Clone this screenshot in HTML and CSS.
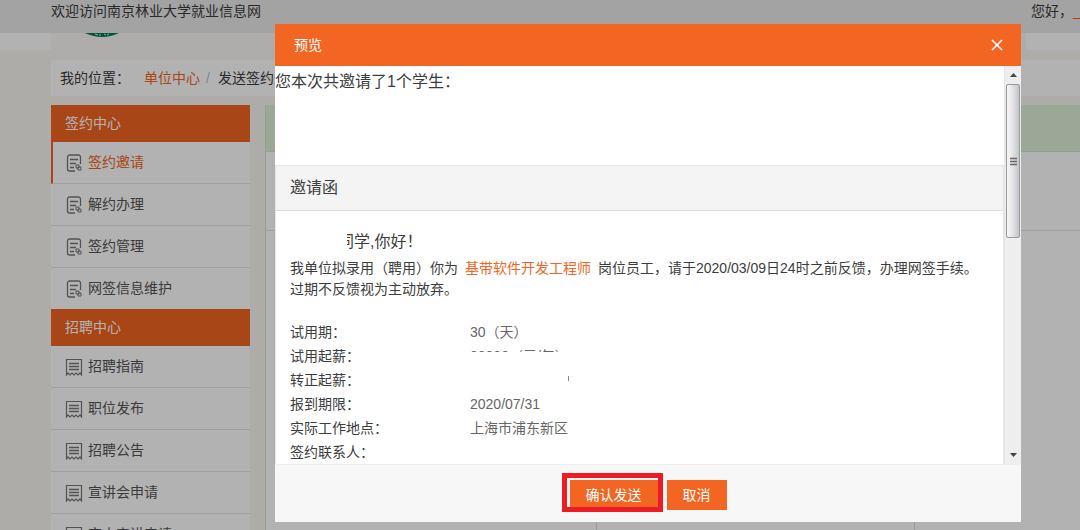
FILE: index.html
```html
<!DOCTYPE html>
<html lang="zh-CN">
<head>
<meta charset="utf-8">
<title>发送签约邀请</title>
<link rel="stylesheet" href="styles.css">
</head>
<body>
<svg class="defs" aria-hidden="true">
  <symbol id="icon-doc" viewBox="0 0 16 18">
    <path d="M14.500 10V3a2 2 0 0 0-2-2H3.500A2 2 0 0 0 1.500 3v12a2 2 0 0 0 2 2H9M4 5.500h8M4 9.500h6M4 13.500h4" fill="none" stroke="currentColor" stroke-width="1.300"/>
    <path d="M10 11h3v3h-3zM12 13h3v3h-3z" fill="none" stroke="currentColor"/>
  </symbol>
  <symbol id="icon-bill" viewBox="0 0 18 18">
    <path d="M1.500 17v-15.500h15v15.500l-1.500-2-2 2-2-2-2 2-2-2-2 2-2-2z" fill="none" stroke="currentColor" stroke-width="1.200"/>
    <path d="M4 5.500h10M4 8.500h10M4 11.500h10" fill="none" stroke="currentColor" stroke-width="1.600"/>
  </symbol>
</svg>

<div class="page">
  <div class="topbar">
    <span>欢迎访问南京林业大学就业信息网</span>
    <span class="greeting">您好，<a href="#" class="account">_</a></span>
  </div>
  <div class="header">
    <div class="header-inner">
      <svg class="logo" viewBox="0 0 40 5" aria-hidden="true">
        <path d="M3 0h34q-17 8-34 0z" fill="#007a55"/>
        <path d="M13 1l3 1M18 1v2M22 1l2 1M27 1l-2 1" stroke="#d9eee5" fill="none"/>
      </svg>
    </div>
  </div>
  <nav class="breadcrumb">
    <span>我的位置：</span>
    <a href="#">单位中心</a><span class="slash">/</span><span>发送签约邀请</span>
  </nav>
  <div class="columns">
    <aside class="sidebar">
      <h2>签约中心</h2>
      <ul>
        <li class="active"><a href="#"><svg><use href="#icon-doc"/></svg><span>签约邀请</span></a></li>
        <li><a href="#"><svg><use href="#icon-doc"/></svg>解约办理</a></li>
        <li><a href="#"><svg><use href="#icon-doc"/></svg>签约管理</a></li>
        <li><a href="#"><svg><use href="#icon-doc"/></svg>网签信息维护</a></li>
      </ul>
      <h2>招聘中心</h2>
      <ul>
        <li><a href="#"><svg class="bill"><use href="#icon-bill"/></svg>招聘指南</a></li>
        <li><a href="#"><svg class="bill"><use href="#icon-bill"/></svg>职位发布</a></li>
        <li><a href="#"><svg class="bill"><use href="#icon-bill"/></svg>招聘公告</a></li>
        <li><a href="#"><svg class="bill"><use href="#icon-bill"/></svg>宣讲会申请</a></li>
        <li><a href="#"><svg class="bill"><use href="#icon-bill"/></svg>空中宣讲申请</a></li>
      </ul>
    </aside>
    <main class="content">
      <div class="notice"></div>
      <div class="filters"></div>
      <div class="grid"><div></div><div></div><div></div></div>
    </main>
  </div>
</div>

<div class="backdrop"></div>

<section class="modal" role="dialog" aria-labelledby="modal-title">
  <header class="modal-head">
    <h1 id="modal-title">预览</h1>
    <button class="close" type="button" aria-label="关闭">
      <svg viewBox="0 0 12 12"><path d="M1 1l10 10M11 1L1 11" fill="none" stroke="currentColor" stroke-width="1.600"/></svg>
    </button>
  </header>
  <div class="modal-body">
    <div class="scroll-area">
      <p class="summary">您本次共邀请了1个学生：</p>
      <article class="letter">
        <h2>邀请函</h2>
        <div class="letter-body">
          <p class="salute"><span class="masked-name">同</span>学,你好！</p>
          <p class="text">我单位拟录用（聘用）你为<a href="#">基带软件开发工程师</a>岗位员工，请于2020/03/09日24时之前反馈，办理网签手续。过期不反馈视为主动放弃。</p>
          <dl>
            <dt>试用期：</dt><dd>30（天）</dd>
            <dt>试用起薪：</dt><dd><span class="masked-pay">00000（元/年）</span></dd>
            <dt>转正起薪：</dt><dd class="masked-row"><i></i></dd>
            <dt>报到期限：</dt><dd>2020/07/31</dd>
            <dt>实际工作地点：</dt><dd>上海市浦东新区</dd>
            <dt>签约联系人：</dt><dd></dd>
          </dl>
        </div>
      </article>
    </div>
    <div class="scrollbar" aria-hidden="true">
      <span class="arrow"><svg viewBox="0 0 7 4"><path d="M0 4L3.500 0L7 4z"/></svg></span>
      <span class="thumb"><svg viewBox="0 0 7 9"><path d="M0 1.500h7M0 4.500h7M0 7.500h7" stroke="#666" stroke-width="1.500"/></svg></span>
      <span class="arrow down"><svg viewBox="0 0 7 4"><path d="M0 0L3.500 4L7 0z"/></svg></span>
    </div>
  </div>
  <footer class="modal-foot">
    <button class="btn confirm" type="button">确认发送</button>
    <button class="btn" type="button">取消</button>
  </footer>
</section>
</body>
</html>
```

FILE: styles.css
```css
* {
  box-sizing: border-box;
  margin: 0;
  padding: 0;
}

body {
  height: 100vh;
  overflow: hidden;
  background: #f9f7f3;
  color: #3c3c3c;
  font: 14px/21px "Liberation Sans", "Noto Sans CJK SC", sans-serif;
}

a {
  color: #f26522;
  text-decoration: none;
}

ul {
  list-style: none;
}

button {
  border: 0;
  color: #fff;
  font: inherit;
  cursor: pointer;
}

.defs {
  display: none;
}

.page {
  height: 100vh;
  overflow: hidden;
}

/* Page behind the dialog */
.topbar {
  display: flex;
  justify-content: space-between;
  height: 33px;
  padding-left: 51px;
  background: #eaeaea;
  line-height: 23px;
  white-space: nowrap;
}

.greeting {
  width: 49px;
  overflow: hidden;
}

.header {
  height: 17px;
  padding: 0 54px 0 51px;
  background: #fff;
}

.header-inner {
  height: 17px;
  padding-left: 31px;
  background: #f9f8f7;
}

.logo {
  display: block;
  width: 40px;
  height: 5px;
}

.breadcrumb {
  display: flex;
  align-items: center;
  height: 36px;
  margin: 10px 0 9px 51px;
  padding-left: 9px;
  background: #fff;
}

.breadcrumb a {
  margin-left: 14px;
}

.slash {
  width: 18px;
  padding-left: 6px;
  color: #b9bcc9;
}

.columns {
  display: flex;
  gap: 15px;
  padding-left: 51px;
}

.sidebar {
  width: 199px;
  background: #fff;
}

.sidebar h2 {
  height: 37px;
  padding-left: 14px;
  background: #f26522;
  color: #fff;
  font-size: 14px;
  font-weight: 400;
  line-height: 36px;
}

.sidebar li {
  border-bottom: 1px solid #e5e5e5;
}

.sidebar li:last-child {
  border-bottom: 0;
}

.sidebar li a {
  display: flex;
  align-items: center;
  gap: 6px;
  height: 41px;
  padding-left: 15px;
  color: #555;
}

.sidebar li.active {
  border-left: 2px solid #f26522;
}

.sidebar li.active a {
  padding-left: 13px;
}

.sidebar li.active span {
  color: #f26522;
}

.sidebar svg {
  width: 16px;
  height: 18px;
  color: #777;
}

.sidebar svg.bill {
  width: 18px;
  height: 18px;
  margin: 0 -1px;
}

.content {
  flex: 1;
  height: 440px;
  display: flex;
  flex-direction: column;
  border-left: 1px solid #d6e9c6;
  background: #fff;
}

.notice {
  height: 47px;
  border-bottom: 1px solid #d6e9c6;
  background: #dff0d8;
}

.filters {
  height: 79px;
  border-bottom: 1px solid #e5e5e5;
}

.grid {
  flex: 1;
  display: grid;
  grid-template-columns: 330px 318px 1fr;
}

.grid div + div {
  border-left: 1px solid #ddd;
}

.backdrop {
  position: fixed;
  inset: 0;
  background: rgba(0, 0, 0, 0.3);
}

/* Dialog */
.modal {
  position: fixed;
  inset: 24px 59px 8px 275px;
  display: flex;
  flex-direction: column;
  background: #fff;
}

.modal-head {
  display: flex;
  align-items: center;
  justify-content: space-between;
  height: 42px;
  padding: 0 18px 0 19px;
  background: #f26522;
  color: #fff;
}

.modal-head h1 {
  font-size: 14px;
  font-weight: 400;
}

.close {
  width: 12px;
  height: 12px;
  background: none;
}

.close svg {
  display: block;
}

.modal-body {
  flex: 1;
  display: flex;
  min-height: 0;
}

.scroll-area {
  flex: 1;
  overflow: hidden;
}

.summary {
  height: 99px;
  padding-top: 4px;
  font-size: 16px;
  line-height: 24px;
}

.letter {
  border: 1px solid #e5e5e5;
}

.letter h2 {
  padding-left: 14px;
  border-bottom: 1px solid #ddd;
  background: #f4f4f4;
  font-size: 16px;
  font-weight: 400;
  line-height: 44px;
}

.letter-body {
  padding: 20px 14px;
}

.salute {
  display: flex;
  margin-bottom: 6px;
  padding-left: 57px;
  font-size: 16px;
}

.masked-name {
  display: flex;
  justify-content: flex-end;
  width: 7px;
  overflow: hidden;
}

.text a {
  margin: 0 7px;
}

dl {
  display: grid;
  grid-template-columns: 180px 1fr;
  grid-auto-rows: 24px;
  margin-top: 20px;
  line-height: 24px;
}

dd {
  color: #666;
}

.masked-pay {
  display: block;
  height: 8px;
  overflow: hidden;
}

.masked-row {
  padding: 8px 0 0 98px;
}

.masked-row i {
  display: block;
  width: 1px;
  height: 5px;
  background: #888;
}

.scrollbar {
  display: flex;
  flex-direction: column;
  width: 17px;
  padding: 0 1px;
  border-left: 1px solid #e6e6e6;
  background: #eee;
}

.arrow {
  display: grid;
  place-items: center;
  height: 18px;
}

.arrow svg {
  width: 7px;
  height: 4px;
  fill: #444;
}

.arrow.down {
  margin-top: auto;
}

.thumb {
  display: grid;
  place-items: center;
  height: 154px;
  border: 1px solid #999;
  border-radius: 2px;
  background: linear-gradient(90deg, #f7f7f7, #e4e4e6 45%, #c4c5ca);
}

.thumb svg {
  width: 7px;
  height: 9px;
}

.modal-foot {
  display: flex;
  justify-content: center;
  gap: 9px;
  padding: 15px 0 12px;
  border-top: 1px solid #eee;
  background: #f7f7f7;
}

.btn {
  height: 30px;
  padding: 0 16px;
  background: #f26522;
  line-height: 28px;
}

.confirm {
  position: relative;
}

.confirm::after {
  content: "";
  position: absolute;
  inset: -7px -5px -2px -8px;
  border: 5px solid #ed1c24;
}
```
